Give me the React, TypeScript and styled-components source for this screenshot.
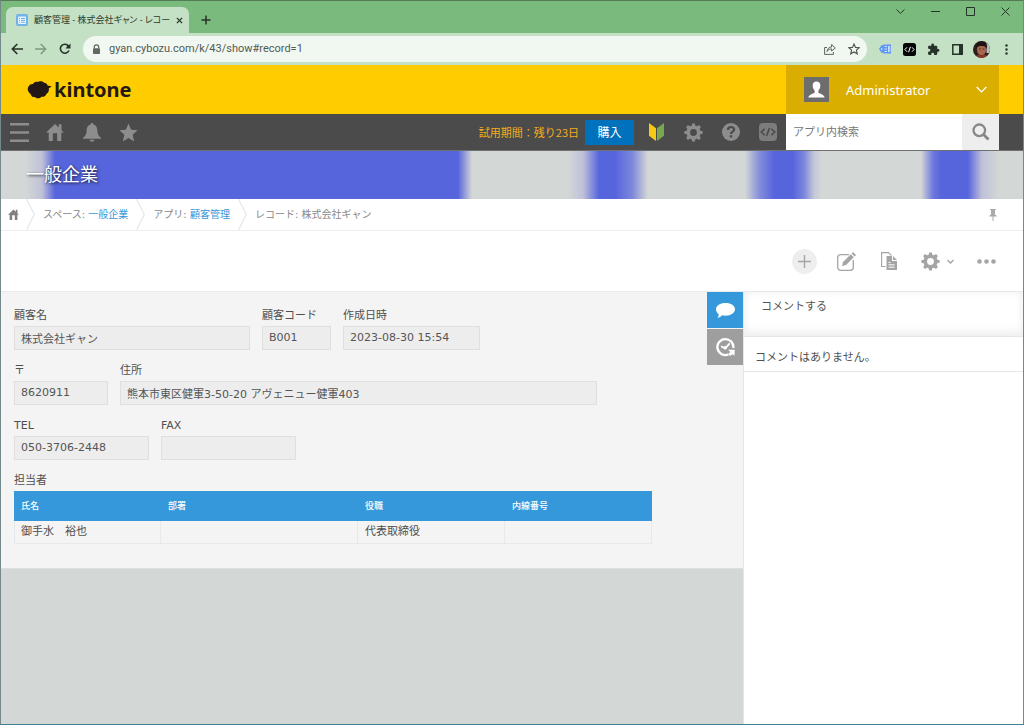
import React from 'react';
import styled, { createGlobalStyle, css } from 'styled-components';

const jp = '"Noto Sans CJK JP", sans-serif';

const GlobalStyle = createGlobalStyle`
  *, *::before, *::after { box-sizing: border-box; }
  body {
    margin: 0;
    font: 11px/18px "DejaVu Sans", ${jp};
    color: #4f4f4f;
    background: #d3d7d6;
  }
  button, input, textarea {
    font: inherit;
    color: inherit;
    border: 0;
    padding: 0;
    margin: 0;
    background: none;
    outline: 0;
    border-radius: 0;
  }
  button { display: flex; align-items: center; justify-content: center; }
  svg { display: block; flex: none; }
`;

const Window = styled.div`
  display: flex;
  flex-direction: column;
  min-height: 100vh;
  border: 1px solid #74898a;
  border-top-color: #557a58;
  border-bottom-color: #3f7d92;
`;

/* Browser chrome */
const TabStrip = styled.div`
  display: flex;
  height: 32px;
  padding-left: 5px;
  background: #7abb7d;
`;
const Tab = styled.div`
  display: flex;
  align-items: center;
  width: 183px;
  height: 26px;
  margin-top: 6px;
  padding: 0 8px 0 10px;
  border-radius: 7px 7px 0 0;
  background: #c5e1c5;
`;
const TabTitle = styled.span`
  flex: 1;
  margin: 0 4px 0 6px;
  white-space: nowrap;
  font: 9px/16px "Open Sans", ${jp};
  font-feature-settings: "palt";
  color: #2c3b2d;
`;
const PlainButton = styled.button<{ $w?: number; $h?: number; $color?: string }>`
  width: ${p => p.$w ?? 24}px;
  height: ${p => p.$h ?? 24}px;
  flex: none;
  color: ${p => p.$color ?? '#263328'};
`;
const WindowControls = styled.div`
  display: flex;
  margin-left: auto;
`;
const AddressRow = styled.div`
  display: flex;
  align-items: center;
  height: 32px;
  padding: 0 5px 0 4px;
  background: #c5e1c5;
`;
const AddressBox = styled.label`
  display: flex;
  align-items: center;
  flex: 1;
  height: 26px;
  margin: 0 6px 0 6px;
  padding: 0 1px 0 8px;
  border-radius: 13px;
  background: #f1f7f1;
`;
const AddressInput = styled.input`
  flex: 1;
  min-width: 0;
  margin-left: 7px;
  font: 11px/18px Roboto, ${jp};
  color: #525c54;
`;
const Portrait = styled.span`
  display: block;
  width: 17px;
  height: 17px;
  border-radius: 50%;
  overflow: hidden;
`;

/* Brand header */
const Brand = styled.header`
  display: flex;
  align-items: center;
  justify-content: space-between;
  height: 49px;
  padding: 0 24px 0 26px;
  background: #ffcc00;
`;
const Logo = styled.a`
  display: flex;
  align-items: center;
  gap: 2px;
  color: #231815;
  text-decoration: none;
  font: bold 20px/24px "Noto Sans", sans-serif;
`;
const Account = styled.button`
  justify-content: flex-start;
  width: 213px;
  height: 49px;
  padding: 0 12px 0 18px;
  background: #d9ae00;
  color: #fff;
  font: 13px/20px "Noto Sans", sans-serif;
  span { flex: 1; margin-left: 17px; text-align: left; }
`;

/* Dark global navigation */
const GlobalNav = styled.nav`
  display: flex;
  align-items: center;
  height: 37px;
  padding-right: 24px;
  border-bottom: 1px solid #6f7070;
  background: #4b4b4b;
`;
const NavButton = styled.button<{ $w?: number }>`
  width: ${p => p.$w ?? 37}px;
  height: 36px;
  color: #8d8d8d;
`;
const Trial = styled.span`
  margin-left: auto;
  color: #f5ab1c;
  font: 11px/18px ${jp};
`;
const Purchase = styled.button`
  width: 49px;
  height: 25px;
  margin: 0 4px 0 6px;
  background: #0071bd;
  color: #fff;
  font: 12px/18px ${jp};
`;
const Search = styled.label`
  display: flex;
  width: 213px;
  height: 36px;
  background: #fff;
  input { flex: 1; min-width: 0; padding: 2px 0 0 7px; }
  input::placeholder { color: #777; opacity: 1; }
`;
const SearchButton = styled.button`
  width: 37px;
  background: #eeeeee;
  color: #888;
`;

const Banner = styled.div`
  height: 48px;
  padding: 0 25px;
  background: linear-gradient(90deg,
    #d3d7d6 25px, #bfc1d8 41px, #5765dd 54px, #5765dd 457px,
    #d3d7d6 471px, #d3d7d6 567px, #bfc1d8 582px, #5765dd 598px, #5765dd 614px,
    #7c87db 631px, #d3d7d6 647px, #d3d7d6 744px, #8690d9 758px, #5765dd 773px, #5765dd 792px,
    #7c87db 803px, #c4c7d8 813px, #d3d7d6 821px, #d3d7d6 920px, #6e79dc 932px, #5765dd 940px, #5765dd 967px,
    #bfc1d8 981px, #d3d7d6 998px);
  h1 {
    margin: 0;
    font: 18px/44px ${jp};
    color: #fff;
    text-shadow: 1px 1px 3px rgba(0, 0, 0, 0.8);
  }
`;

const Breadcrumb = styled.nav`
  display: flex;
  align-items: center;
  height: 32px;
  padding: 0 24px 0 7px;
  border-bottom: 1px solid #eeefef;
  background: #fff;
  color: #888;
  font-size: 10px;
  > svg { margin: 0 8px; }
  > a + svg { margin: 0 8px 0 7px; }
  a { color: #3498db; text-decoration: none; }
  button { margin-left: auto; }
`;
const HomeLink = styled.a`
  display: block;
  svg { color: #808080; }
`;

const Actions = styled.div`
  display: flex;
  align-items: center;
  justify-content: flex-end;
  height: 61px;
  padding-right: 27px;
  border-bottom: 1px solid #e9e9e9;
  background: #fff;
  color: #a5a5a5;
`;
const ActionButton = styled.button<{ $w: number; $gap?: number; $round?: boolean }>`
  width: ${p => p.$w}px;
  height: 25px;
  margin-left: ${p => p.$gap ?? 0}px;
  ${p => p.$round && css`border-radius: 50%; background: #eeeeee;`}
`;
const MenuGroup = styled.span`
  display: flex;
  align-items: center;
  gap: 7px;
`;

/* Record body */
const Body = styled.div`
  display: flex;
  flex: 1;
`;
const Main = styled.main`
  flex: 1;
  min-width: 0;
  background: #d3d7d6;
`;
const Record = styled.div`
  display: flex;
  justify-content: space-between;
  background: #f4f4f4;
  border-bottom: 1px solid #dcdfde;
`;
const Form = styled.form`
  display: flex;
  flex-direction: column;
  gap: 12px;
  padding: 15px 13px 24px;
`;
const Row = styled.div`
  display: flex;
  gap: 12px;
`;
const Field = styled.label<{ $w: number }>`
  display: flex;
  flex-direction: column;
  gap: 1px;
  width: ${p => p.$w}px;
  input {
    height: 24px;
    padding: 0 6px 1px;
    border: 1px solid #dfdfdf;
    background: #ededed;
    color: #555;
  }
`;
const Members = styled.table`
  width: 638px;
  border-collapse: separate;
  border-spacing: 0;
  table-layout: fixed;
  caption { text-align: left; padding-bottom: 1px; }
  th {
    height: 30px;
    padding: 0 7px;
    background: #3498db;
    color: #fff;
    font: 500 9px/14px ${jp};
    text-align: left;
  }
  td {
    height: 23px;
    padding: 0 7px;
    border: solid #e6eaea;
    border-width: 0 1px 1px 0;
  }
  td:first-child { border-left-width: 1px; padding-left: 6px; }
`;
const SideTabs = styled.div`
  display: flex;
  flex-direction: column;
  gap: 1px;
`;
const SideTab = styled.button<{ $active?: boolean }>`
  width: 36px;
  height: 36px;
  color: #fff;
  background: ${p => (p.$active ? '#3498db' : '#9e9e9e')};
`;
const Comments = styled.aside`
  width: 280px;
  border-left: 1px solid #e3e7e7;
  background: #fff;
  textarea {
    display: block;
    width: 100%;
    height: 45px;
    padding: 6px 17px;
    resize: none;
    border-bottom: 1px solid #e3e7e8;
    box-shadow: inset 0 -6px 12px -3px #eeeeee, inset 0 0 8px #f0f0f0;
  }
  textarea::placeholder { color: #555; opacity: 1; }
  p {
    margin: 0;
    padding: 12px 11px 4px;
    border-bottom: 1px solid #e3e7e8;
  }
`;

/* Icons */
const Svg = ({ w, h = w, box, children }: { w: number; h?: number; box: string; children: React.ReactNode }) => (
  <svg width={w} height={h} viewBox={box} fill="currentColor" aria-hidden="true">{children}</svg>
);
const Line = ({ w, h = w, box, sw = 1.5, d }: { w: number; h?: number; box: string; sw?: number; d: string }) => (
  <svg width={w} height={h} viewBox={box} fill="none" stroke="currentColor" strokeWidth={sw} aria-hidden="true"><path d={d} /></svg>
);
const Home = ({ size }: { size: number }) => (
  <Svg w={size} box="0 0 20 20">
    <path d="M10 1 0 10.5h3V20h4.6v-8.5h4.8V20H17v-9.500h3L17.200 8V1.300h-3V5Z" />
  </Svg>
);
const Gear = ({ size }: { size: number }) => (
  <svg width={size} height={size} viewBox="0 0 20 20" fill="none" stroke="currentColor" aria-hidden="true">
    <circle cx="10" cy="10" r="5.5" strokeWidth="3.8" />
    {[0, 45, 90, 135, 180, 225, 270, 315].map(a => (
      <path key={a} d="M7.800 4 8.600.4h2.800L12.200 4Z" fill="currentColor" stroke="none" transform={`rotate(${a} 10 10)`} />
    ))}
  </svg>
);
const Chevron = ({ w, sw }: { w: number; sw?: number }) => (
  <Line w={w} h={w} box="0 0 10 10" sw={sw ?? 1.2} d="M.6 2.800 5 7.200 9.400 2.800" />
);
const Separator = () => (
  <svg width="9" height="31" viewBox="0 0 9 31" fill="none" stroke="#e3e7e8" strokeWidth="1.2" aria-hidden="true">
    <path d="M.5 0 8.300 15.500.5 31" />
  </svg>
);

const columns = [
  { name: '氏名', width: 147, value: '御手水　裕也' },
  { name: '部署', width: 197, value: '' },
  { name: '役職', width: 147, value: '代表取締役' },
  { name: '内線番号', width: 147, value: '' },
];
const rows = [
  [
    { label: '顧客名', width: 236, value: '株式会社ギャン' },
    { label: '顧客コード', width: 69, value: 'B001' },
    { label: '作成日時', width: 137, value: '2023-08-30 15:54' },
  ],
  [
    { label: '〒', width: 94, value: '8620911' },
    { label: '住所', width: 477, value: '熊本市東区健軍3-50-20 アヴェニュー健軍403' },
  ],
  [
    { label: 'TEL', width: 135, value: '050-3706-2448' },
    { label: 'FAX', width: 135, value: '' },
  ],
];

function BrowserChrome() {
  return (
    <>
      <TabStrip>
        <Tab>
          <svg width="12" height="12" viewBox="0 0 12 12" aria-hidden="true">
            <rect width="12" height="12" rx="2" fill="#6fb3ea" />
            <rect x="2" y="2.500" width="8" height="7.500" rx="1" fill="#e8f4fd" />
            <path d="M3 4.500h1M5 4.500h4M3 6.300h1M5 6.300h4M3 8.200h1M5 8.200h4" stroke="#6fb3ea" />
          </svg>
          <TabTitle>顧客管理 - 株式会社ギャン - レコー</TabTitle>
          <PlainButton $w={10} aria-label="タブを閉じる"><Line w={7} box="0 0 8 8" sw={1.5} d="M1 1l6 6M7 1 1 7" /></PlainButton>
        </Tab>
        <PlainButton $w={34} $h={38} aria-label="新しいタブ"><Line w={10} box="0 0 10 10" sw={1.500} d="M5 .5v9M.5 5h9" /></PlainButton>
        <WindowControls>
          <PlainButton $w={35} $h={21} aria-label="タブを検索"><Chevron w={9} sw={1.1} /></PlainButton>
          <PlainButton $w={35} $h={21} aria-label="最小化"><Line w={9} box="0 0 9 9" sw={1} d="M0 4.500h9" /></PlainButton>
          <PlainButton $w={35} $h={21} aria-label="最大化"><Line w={9} box="0 0 9 9" sw={1} d="M.5.5h8v8h-8Z" /></PlainButton>
          <PlainButton $w={35} $h={21} aria-label="閉じる"><Line w={9} box="0 0 9 9" sw={1} d="M.5.5l8 8M8.500.5l-8 8" /></PlainButton>
        </WindowControls>
      </TabStrip>
      <AddressRow>
        <PlainButton $w={24} aria-label="戻る"><Line w={12} box="0 0 12 12" sw={1.600} d="M12 6H1.500M6.300 1 1.300 6l5 5" /></PlainButton>
        <PlainButton $w={24} $color="#7f9780" aria-label="進む"><Line w={12} box="0 0 12 12" sw={1.400} d="M0 6h10.500M5.700 1l5 5-5 5" /></PlainButton>
        <PlainButton $w={24} aria-label="再読み込み">
          <Svg w={12} box="0 0 12 12"><path d="M10 7.500A4.500 4.500 0 1 1 9.500 3L7.800 4.700" fill="none" stroke="currentColor" strokeWidth="1.600" /><path d="M11.500.5v5h-5Z" /></Svg>
        </PlainButton>
        <AddressBox>
          <Svg w={11} box="0 0 11 11"><path d="M3.300 4.500V3a2.200 2.200 0 0 1 4.400 0v1.500" fill="none" stroke="#5f6861" strokeWidth="1.200" /><rect x="2" y="4.200" width="7" height="5.800" rx=".8" fill="#5f6861" /></Svg>
          <AddressInput aria-label="アドレス" defaultValue="gyan.cybozu.com/k/43/show#record=1" />
          <PlainButton $color="#5c655d" aria-label="共有"><Line w={12} box="0 0 12 12" sw={1} d="M3 4.500H.6v6.900h8.800V9M3 8.500C3.500 5.500 5 4 7.600 4V1.500L11.300 5 7.600 8V5.900C5.500 5.900 4.200 6.600 3 8.500Z" /></PlainButton>
          <PlainButton $color="#4c554d" aria-label="ブックマーク"><Line w={12} box="0 0 12 12" sw={1.100} d="m6 1 1.500 3.400 3.700.3-2.800 2.400.9 3.700L6 8.900l-3.300 1.900.9-3.700L.8 4.700l3.700-.3Z" /></PlainButton>
        </AddressBox>
        <PlainButton $w={24} aria-label="拡張機能：翻訳">
          <svg width="12" height="10" viewBox="0 0 12 10" aria-hidden="true"><path d="M0 5 2.500 1.200h2V.5H12v9H4.500V8.800h-2Z" fill="#5b95f5" /><path d="M5.500 2.500H8M5.500 5H8M5.500 7.500H8M9.500 2v6M10.800 2v6" fill="none" stroke="#fff" strokeWidth=".7" /><circle cx="2.700" cy="5" r=".8" fill="#fff" /></svg>
        </PlainButton>
        <PlainButton $w={24} aria-label="拡張機能：コード">
          <svg width="13" height="13" viewBox="0 0 13 13" aria-hidden="true"><rect width="13" height="13" rx="2.500" fill="#050505" /><path d="M4 4.300 1.900 6.500 4 8.700M9 4.300l2.100 2.200L9 8.700M7.400 3.800 5.600 9.200" fill="none" stroke="#fff" /></svg>
        </PlainButton>
        <PlainButton $w={24} aria-label="拡張機能">
          <Svg w={13} box="0 0 24 24"><path d="M20.500 11H19V7a2 2 0 0 0-2-2h-4V3.500a2.500 2.500 0 0 0-5 0V5H4a2 2 0 0 0-2 2v3.800h1.500a2.700 2.700 0 0 1 0 5.400H2V20a2 2 0 0 0 2 2h3.800v-1.500a2.700 2.700 0 0 1 5.400 0V22H17a2 2 0 0 0 2-2v-4h1.500a2.500 2.500 0 0 0 0-5Z" /></Svg>
        </PlainButton>
        <PlainButton $w={24} aria-label="サイドパネル">
          <Svg w={11} box="0 0 11 11"><path d="M.8.8h9.400v9.400H.8Z" fill="none" stroke="currentColor" strokeWidth="1.500" /><path d="M7 0h4v11H7Z" /></Svg>
        </PlainButton>
        <PlainButton $w={25} aria-label="プロフィール">
          <Portrait>
            <svg width="17" height="17" viewBox="0 0 17 17" aria-hidden="true">
              <rect width="17" height="17" fill="#2b1d1b" />
              <rect x="13.500" width="4" height="12" fill="#b9bcb9" />
              <ellipse cx="8.500" cy="8.500" rx="4.600" ry="5.900" fill="#a8664f" />
              <path d="M3 8C2 2 6 .5 8.500.5S15 2 13.800 8C12.800 5 10.500 5 8.500 5S4.500 5 3 8Z" fill="#1e1413" />
              <path d="M5.800 8H7.800M9.500 8H11.500" stroke="#5f3328" />
              <path d="M2 17c1-4 4-3.500 6.500-2.500C11 13.500 14 13 15.500 17Z" fill="#8c3428" />
            </svg>
          </Portrait>
        </PlainButton>
        <PlainButton $w={24} aria-label="メニュー">
          <Svg w={3} h={11} box="0 0 3 11"><circle cx="1.500" cy="1.500" r="1.200" /><circle cx="1.500" cy="5.500" r="1.200" /><circle cx="1.500" cy="9.500" r="1.200" /></Svg>
        </PlainButton>
      </AddressRow>
    </>
  );
}

export default function App() {
  return (
    <Window>
      <GlobalStyle />
      <BrowserChrome />
      <Brand>
        <Logo href="#top">
          <Svg w={25} h={18} box="0 0 25 18">
            <path d="M1.500 5.500C2.500 3.500 4.500 2.800 6 3 7 1 9 .5 10.500 1 12 0 15.500-.2 17 1.800c1.500-.1 3 .8 3.600 2.800L24.800 5.500 21.800 7.300c.4 2-.2 4.600-2.300 5.400C19 15 16.500 16.200 14.500 15.700 12.500 17.800 9.500 17.900 8 16 5.500 16.300 4 15 3.600 12.900 1 11.500-.2 8 1.500 5.500Z" />
          </Svg>
          kintone
        </Logo>
        <Account>
          <svg width="25" height="25" viewBox="0 0 25 25" aria-hidden="true">
            <rect width="25" height="25" fill="#6d6d6d" />
            <path d="M12.500 4.500c-2.600 0-4 1.900-3.800 4.300.1 2.200.8 3.700 1.900 4.700v2.200c-2 1.300-5.600 1.600-6.300 4.800h16.400c-.7-3.200-4.300-3.500-6.300-4.800v-2.200c1.100-1 1.800-2.500 1.900-4.700.2-2.400-1.200-4.300-3.800-4.300Z" fill="#fff" />
          </svg>
          <span>Administrator</span>
          <Chevron w={11} />
        </Account>
      </Brand>
      <GlobalNav>
        <NavButton $w={36} aria-label="メニュー"><Line w={19} box="0 0 19 19" sw={2.400} d="M0 1.200h19M0 9.500h19M0 17.800h19" /></NavButton>
        <NavButton $w={36} aria-label="ポータル"><Home size={18} /></NavButton>
        <NavButton aria-label="通知">
          <Svg w={18} h={19} box="0 0 18 19"><path d="M9 0C8 0 7.500.7 7.500 1.500 4.500 2.300 3.700 5 3.600 8 3.500 11 2.500 13 0 14.800v.9h18v-.9C15.500 13 14.500 11 14.400 8c-.1-3-.9-5.700-3.900-6.500C10.500.7 10 0 9 0ZM6.500 16.700h5c-.4 1.300-1.300 2-2.500 2s-2.100-.7-2.500-2Z" /></Svg>
        </NavButton>
        <NavButton aria-label="お気に入り">
          <Svg w={19} box="0 0 19 19"><path d="m9.500.5 2.600 6.200 6.500.6-5 4.400 1.600 6.700-5.700-3.500-5.700 3.500 1.600-6.700-5-4.400 6.500-.6Z" /></Svg>
        </NavButton>
        <Trial>試用期間：残り23日</Trial>
        <Purchase>購入</Purchase>
        <NavButton aria-label="はじめに">
          <svg width="15" height="18" viewBox="0 0 15 18" aria-hidden="true"><path d="M0 0 7 5.200V18L0 12.800Z" fill="#f6c915" /><path d="M15 0 8 5.200V18l7-5.200Z" fill="#78a94c" /></svg>
        </NavButton>
        <NavButton aria-label="設定"><Gear size={19} /></NavButton>
        <NavButton aria-label="ヘルプ">
          <svg width="18" height="18" viewBox="0 0 18 18" aria-hidden="true"><circle cx="9" cy="9" r="9" fill="#8d8d8d" /><path d="M6 7c0-2 1.300-3 3-3s3.100 1 3.100 2.600C12.100 8.600 9 8.700 9 11" fill="none" stroke="#4b4b4b" strokeWidth="2.200" /><rect x="7.800" y="12.200" width="2.400" height="2.300" fill="#4b4b4b" /></svg>
        </NavButton>
        <NavButton aria-label="開発者">
          <svg width="18" height="18" viewBox="0 0 18 18" aria-hidden="true"><rect width="18" height="18" rx="4" fill="#7c7c7c" /><path d="M5.600 5.700 2.300 9l3.300 3.300M12.400 5.700 15.700 9l-3.300 3.300M10.500 5l-3 8" fill="none" stroke="#4b4b4b" strokeWidth="1.600" /></svg>
        </NavButton>
        <Search>
          <input aria-label="アプリ内検索" placeholder="アプリ内検索" />
          <SearchButton aria-label="検索"><Svg w={18} box="0 0 18 18"><circle cx="7.300" cy="7.300" r="5.800" fill="none" stroke="currentColor" strokeWidth="2.300" /><path d="m11.500 11.500 5 5" stroke="currentColor" strokeWidth="2.800" /></Svg></SearchButton>
        </Search>
      </GlobalNav>
      <Banner><h1>一般企業</h1></Banner>
      <Breadcrumb>
        <HomeLink href="#home" aria-label="ホーム"><Home size={11} /></HomeLink>
        <Separator />
        <span>スペース: <a href="#space">一般企業</a></span>
        <Separator />
        <span>アプリ: <a href="#app">顧客管理</a></span>
        <Separator />
        <span>レコード: 株式会社ギャン</span>
        <PlainButton $w={12} $color="#aaa" aria-label="ピン留め"><Svg w={8} h={12} box="0 0 8 12"><path d="M1 0h6v1H6v4.500l1.700 1.300v.7H4.500V12h-1V7.500H.3v-.7L2 5.500V1H1Z" /></Svg></PlainButton>
      </Breadcrumb>
      <Actions>
        <ActionButton $w={25} $round aria-label="追加"><Line w={13} box="0 0 13 13" sw={1.400} d="M6.500 0v13M0 6.500h13" /></ActionButton>
        <ActionButton $w={19} $gap={20} aria-label="編集">
          <Svg w={19} box="0 0 19 19"><path d="M12 2.700H3.700a3 3 0 0 0-3 3v9.600a3 3 0 0 0 3 3h9.600a3 3 0 0 0 3-3V8" fill="none" stroke="currentColor" strokeWidth="1.300" /><path d="m5 14 1-4L13.800 2.200l3 3L9 13ZM14.600 1.400 16 0l3 3-1.400 1.400Z" /></Svg>
        </ActionButton>
        <ActionButton $w={17} $gap={24} aria-label="再利用">
          <Svg w={16} h={18} box="0 0 16 18"><path d="M4.500 14.500H.6V.6h6.900l3 3" fill="none" stroke="currentColor" strokeWidth="1.100" /><path d="M5.500 4H11v5h5v9H5.500ZM12 4l4 4h-4Z" /><path d="M7.500 10.500h2M7.500 12.800h6M7.500 15.200h6" stroke="#fff" /></Svg>
        </ActionButton>
        <ActionButton $w={33} $gap={24} aria-label="アプリの設定">
          <MenuGroup><Gear size={19} /><Chevron w={7} sw={2} /></MenuGroup>
        </ActionButton>
        <ActionButton $w={19} $gap={23} aria-label="その他">
          <Svg w={19} h={5} box="0 0 19 5"><circle cx="2.500" cy="2.500" r="2.300" /><circle cx="9.500" cy="2.500" r="2.300" /><circle cx="16.500" cy="2.500" r="2.300" /></Svg>
        </ActionButton>
      </Actions>
      <Body>
        <Main>
          <Record>
            <Form>
              {rows.map((row, i) => (
                <Row key={i}>
                  {row.map(f => (
                    <Field key={f.label} $w={f.width}>
                      {f.label}
                      <input readOnly value={f.value} />
                    </Field>
                  ))}
                </Row>
              ))}
              <Members>
                <caption>担当者</caption>
                <colgroup>{columns.map(c => <col key={c.name} width={c.width} />)}</colgroup>
                <thead><tr>{columns.map(c => <th key={c.name} scope="col">{c.name}</th>)}</tr></thead>
                <tbody><tr>{columns.map(c => <td key={c.name}>{c.value}</td>)}</tr></tbody>
              </Members>
            </Form>
            <SideTabs>
              <SideTab $active type="button" aria-label="コメント">
                <Svg w={19} h={15} box="0 0 19 15"><path d="M9.500 0C15 0 19 2.700 19 6.300s-4 6.400-9.500 6.400c-1.300 0-2.500-.1-3.500-.4C4.800 13.800 3.500 14.600 1.500 15c.9-1.200 1.300-2.300 1.200-3.700C1 10.200 0 8.300 0 6.300 0 2.700 4 0 9.500 0Z" /></Svg>
              </SideTab>
              <SideTab type="button" aria-label="変更履歴">
                <Svg w={19} h={20} box="0 0 19 20"><path d="M12.500 17.400A8 8 0 1 1 17.300 11" fill="none" stroke="currentColor" strokeWidth="2.300" /><path d="M12 12.800h6.700l-.2 6-2-1.500-2.500 1.700-1.600-2.600 2-1.400Z" /><path d="m5 9.300 4.200 2 4.500-5" fill="none" stroke="currentColor" strokeWidth="1.800" /><circle cx="9.200" cy="10.800" r="1.700" /></Svg>
              </SideTab>
            </SideTabs>
          </Record>
        </Main>
        <Comments>
          <textarea aria-label="コメントする" placeholder="コメントする" />
          <p>コメントはありません。</p>
        </Comments>
      </Body>
    </Window>
  );
}
